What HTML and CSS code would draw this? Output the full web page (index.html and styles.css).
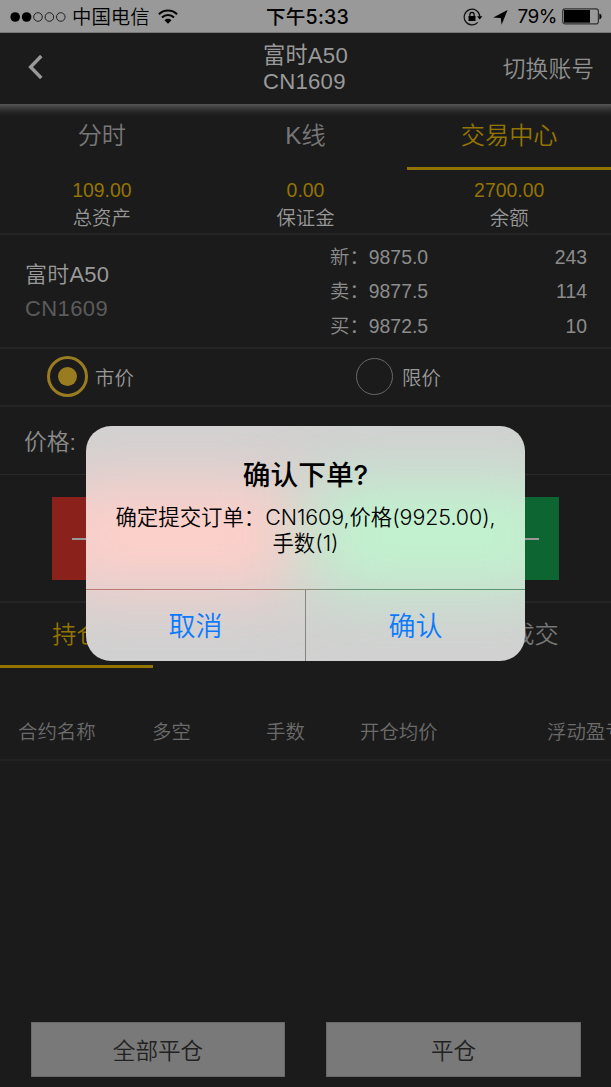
FILE: index.html
```html
<!DOCTYPE html>
<html lang="zh-CN">
<head>
<meta charset="utf-8">
<title>交易中心</title>
<link rel="stylesheet" href="styles.css">
</head>
<body>
<div class="screen">
  <div class="status">
    <div class="status-left">
      <svg class="signal" width="57" height="12" viewBox="0 0 57 12"><g fill="#000"><circle cx="5.2" cy="6" r="4.8"/><circle cx="16.6" cy="6" r="4.8"/></g><g fill="none" stroke="#222" stroke-width="1"><circle cx="28" cy="6" r="4.3"/><circle cx="39.4" cy="6" r="4.3"/><circle cx="50.8" cy="6" r="4.3"/></g></svg>
      <span class="carrier">中国电信</span>
      <svg class="wifi" width="20" height="15" viewBox="0 0 20 15"><g fill="none" stroke="#000" stroke-width="2"><path d="M.9 5.2a13 13 0 0 1 18.2 0"/><path d="M4 8.5a8.5 8.5 0 0 1 12 0"/></g><path d="M6.5 11.2a5 5 0 0 1 7 0L10 14.8z"/></svg>
    </div>
    <div class="time">下午5:33</div>
    <div class="status-right">
      <svg width="20" height="18" viewBox="0 0 20 18"><path d="M14.8 14.3A7.8 7.8 0 1 1 16.8 8.5" fill="none" stroke="#111" stroke-width="1.2"/><path d="M14 8.2h5.4l-2.7 3.4z"/><rect x="5.5" y="8" width="7" height="5"/><path d="M6.9 8V6.4a2.1 2.1 0 0 1 4.2 0V8" fill="none" stroke="#000" stroke-width="1.2"/></svg>
      <svg class="arrow" width="15" height="15" viewBox="0 0 15 15"><path d="M14.6 0L8.6 14.8 7.8 8 .2 7.4z"/></svg>
      <span class="percent">79%</span>
      <svg class="battery" width="40" height="17" viewBox="0 0 40 17"><rect x=".7" y=".9" width="35.7" height="15" rx="2.5" fill="none" stroke="#333" stroke-width="1.2"/><path d="M2 2h26v12.7H2z"/><path d="M37.4 5.6c2.8.6 2.8 5.2 0 5.8z"/></svg>
    </div>
  </div>
  <header class="header">
    <svg class="back" width="15" height="24" viewBox="0 0 15 24"><path d="M13.3 1L2.6 12l10.7 11" fill="none" stroke="#999" stroke-width="3.4"/></svg>
    <div class="heading"><div>富时A50</div><div>CN1609</div></div>
    <div class="switch">切换账号</div>
  </header>
  <nav class="tabs"><div class="tab">分时</div><div class="tab">K线</div><div class="tab active">交易中心</div></nav>
  <section class="stats">
    <div><b>109.00</b><span>总资产</span></div>
    <div><b>0.00</b><span>保证金</span></div>
    <div><b>2700.00</b><span>余额</span></div>
  </section>
  <section class="quote">
    <div class="contract"><div class="name">富时A50</div><div class="code">CN1609</div></div>
    <div class="prices">
      <div><span>新：9875.0</span><span>243</span></div>
      <div><span>卖：9877.5</span><span>114</span></div>
      <div><span>买：9872.5</span><span>10</span></div>
    </div>
  </section>
  <section class="modes">
    <div class="mode"><i class="radio on"></i><span>市价</span></div>
    <div class="mode limit"><i class="radio"></i><span>限价</span></div>
  </section>
  <section class="price-row"><span>价格:</span></section>
  <section class="orders"><div class="order sell"><i></i></div><div class="order buy"><i></i></div></section>
  <nav class="subtabs"><div class="subtab chosen">持仓</div><div class="subtab last">成交</div></nav>
  <div class="table-head"><span>合约名称</span><span>多空</span><span>手数</span><span>开仓均价</span><span>浮动盈亏</span></div>
  <footer class="footer"><div class="close-btn">全部平仓</div><div class="close-btn">平仓</div></footer>

  <div class="alert">
    <div class="alert-body">
      <div class="alert-title">确认下单?</div>
      <div class="alert-text">确定提交订单：<span class="latin">CN1609,价格(9925.00),</span><br>手数(1)</div>
    </div>
    <div class="alert-line"></div>
    <div class="alert-actions"><div>取消</div><div>确认</div></div>
  </div>
</div>
</body>
</html>
```
FILE: styles.css
```css
* { box-sizing: border-box; }
body { margin: 0; background: #1b1b1b; }
.screen {
  position: relative; width: 611px; height: 1087px; overflow: hidden;
  display: flex; flex-direction: column;
  background: #1b1b1b; color: #8c8c8c;
  font-family: "Liberation Sans", "Noto Sans CJK SC", sans-serif;
  font-size: 19.4px; font-weight: 350; white-space: nowrap;
}
.status {
  height: 33px; flex: none; background: #999; color: #000;
  display: grid; grid-template-columns: 1fr auto 1fr; align-items: center;
  font-family: Inter, "Noto Sans CJK SC", sans-serif; border-bottom: 1px solid #777;
}
.status-left { display: flex; align-items: center; padding-left: 10px; }
.carrier { font-size: 19.4px; line-height: 32px; margin-left: 5px; padding-top: 1px; font-weight: 350; }
.wifi { margin-left: 8px; margin-top: -1px; }
.time { font-size: 19.6px; line-height: 32px; padding-top: 1px; font-weight: 500; letter-spacing: .2px; margin-left: 4px; }
.status-right { display: flex; align-items: center; justify-content: flex-end; padding-right: 9px; }
.arrow { margin-left: 10px; margin-top: 2px; }
.percent { font-size: 19px; line-height: 32px; padding-top: 1px; margin: 0 5px 0 9px; font-weight: 400; letter-spacing: -.5px; }
.header {
  height: 71px; flex: none; display: grid; grid-template-columns: 1fr auto 1fr; align-items: center;
  padding: 0 17px 0 28px; color: #999;
}
.back { margin-top: -3px; }
.heading { font-size: 22.2px; line-height: 26px; font-weight: 400; margin-left: -11px; padding-top: 1px; letter-spacing: .2px; }
.switch { font-size: 22.8px; text-align: right; color: #8f8f8f; margin-top: -3px; }
.tabs {
  height: 65px; flex: none; display: grid; grid-template-columns: repeat(3, 1fr);
  background: linear-gradient(#565656, #3a3a3a 4px, #222 9px, #1b1b1b 13px);
}
.tab { text-align: center; font-size: 24.2px; line-height: 63px; color: #777; }
.tab.active { color: #947400; border-bottom: 3px solid #947400; }
.stats { height: 66px; flex: none; display: grid; grid-template-columns: repeat(3, 1fr); text-align: center; padding-top: 8px; border-bottom: 2px solid #252525; }
.stats b { display: block; font-weight: 400; color: #947400; line-height: 27px; }
.stats span { display: block; line-height: 29px; color: #999; }
.quote { height: 114px; flex: none; display: flex; justify-content: space-between; padding: 0 24px 0 25px; border-bottom: 2px solid #252525; }
.contract { font-size: 22px; line-height: 34px; padding-top: 23px; letter-spacing: .2px; }
.name { color: #999; }
.code { color: #5b5b5b; letter-spacing: .4px; }
.prices { width: 257px; padding-top: 5px; line-height: 34.3px; }
.prices div { display: flex; justify-content: space-between; }
.modes { height: 58px; flex: none; display: flex; align-items: center; padding: 0 0 1px 47px; border-bottom: 2px solid #252525; color: #999; }
.mode { width: 309px; flex: none; display: flex; align-items: center; gap: 7px; }
.limit { width: auto; gap: 9px; }
.radio { width: 41px; height: 41px; border: 3px solid #997b20; border-radius: 50%; flex: none; padding: 8px; }
.radio.on::before { content: ""; display: block; width: 19px; height: 19px; border-radius: 50%; background: #997b20; }
.limit .radio { width: 37px; height: 37px; border: 1px solid #686868; }
.price-row { height: 68px; flex: none; padding-left: 24px; font-size: 22.8px; line-height: 70px; border-bottom: 1px solid #292929; }
.orders { height: 128px; flex: none; display: flex; justify-content: space-between; padding: 22px 52px; border-bottom: 2px solid #252525; }
.order { width: 244px; height: 83px; display: flex; align-items: center; padding: 0 20px; }
.order i { flex: 1; height: 2px; background: #999; }
.sell { background: #8b211b; }
.buy { background: #0d6532; }
.subtabs { height: 65px; flex: none; display: flex; justify-content: space-between; font-size: 24.2px; line-height: 64px; text-align: center; color: #777; }
.subtab { width: 153px; }
.chosen { color: #947400; border-bottom: 3px solid #947400; }
.table-head { height: 93px; flex: none; padding: 0 0 0 18px; display: grid; grid-template-columns: 134px 114px 94px 187px auto; line-height: 129px; color: #6b6b6b; border-bottom: 2px solid #232323; overflow: hidden; }
.footer { margin-top: auto; display: flex; justify-content: space-between; padding: 0 30px 10px 31px; }
.close-btn { width: 254px; height: 55px; background: #797979; border: 1px solid #686868; color: #222; font-size: 22.6px; line-height: 57px; text-align: center; }
.close-btn + .close-btn { width: 255px; }
.alert {
  position: absolute; left: 86px; top: 426px; width: 439px; height: 235px; overflow: hidden; border-radius: 25px;
  color: #000; font-family: Inter, "Noto Sans CJK SC", sans-serif; text-align: center;
  background: #d1d1d1; isolation: isolate;
}
/* Colour of the order buttons glowing through the frosted panel */
.alert::before, .alert::after {
  content: ""; position: absolute; z-index: -1; top: 57px; height: 106px; width: 244px; filter: blur(33px);
}
.alert::before { left: -34px; background: #ffcfc9; }
.alert::after { left: 229px; background: #c0f4ce; }
.alert-body { height: 163px; padding-top: 31px; }
.alert-title { font-size: 27.7px; line-height: 36px; font-weight: 500; }
.alert-text { font-size: 21.4px; line-height: 26px; margin-top: 11px; }
.latin { letter-spacing: -.05px; }
.alert-line { height: 1px; background: linear-gradient(90deg, #bc7772 0%, #b8827d 40%, #6b9a7b 60%, #57946c); }
.alert-actions { display: grid; grid-template-columns: 219px 1fr; height: 71px; font-size: 27px; line-height: 73px; color: #0b7aff; }
.alert-actions div + div { border-left: 1px solid #858580; }
```
